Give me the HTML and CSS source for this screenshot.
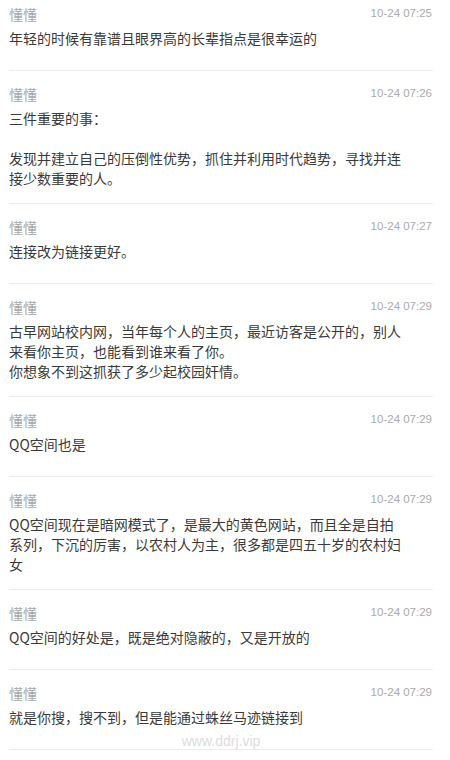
FILE: index.html
```html
<!DOCTYPE html>
<html lang="zh-CN">
<head>
<meta charset="utf-8">
<title>评论</title>
<link rel="stylesheet" href="styles.css">
</head>
<body>
<div class="list">
  <div class="item">
    <div class="head"><span class="name">懂懂</span><span class="time">10-24 07:25</span></div>
    <div class="text">年轻的时候有靠谱且眼界高的长辈指点是很幸运的</div>
  </div>
  <div class="item">
    <div class="head"><span class="name">懂懂</span><span class="time">10-24 07:26</span></div>
    <div class="text">三件重要的事：<br><br>发现并建立自己的压倒性优势，抓住并利用时代趋势，寻找并连接少数重要的人。</div>
  </div>
  <div class="item">
    <div class="head"><span class="name">懂懂</span><span class="time">10-24 07:27</span></div>
    <div class="text">连接改为链接更好。</div>
  </div>
  <div class="item">
    <div class="head"><span class="name">懂懂</span><span class="time">10-24 07:29</span></div>
    <div class="text">古早网站校内网，当年每个人的主页，最近访客是公开的，别人来看你主页，也能看到谁来看了你。<br>你想象不到这抓获了多少起校园奸情。</div>
  </div>
  <div class="item">
    <div class="head"><span class="name">懂懂</span><span class="time">10-24 07:29</span></div>
    <div class="text">QQ空间也是</div>
  </div>
  <div class="item">
    <div class="head"><span class="name">懂懂</span><span class="time">10-24 07:29</span></div>
    <div class="text">QQ空间现在是暗网模式了，是最大的黄色网站，而且全是自拍系列，下沉的厉害，以农村人为主，很多都是四五十岁的农村妇女</div>
  </div>
  <div class="item">
    <div class="head"><span class="name">懂懂</span><span class="time">10-24 07:29</span></div>
    <div class="text">QQ空间的好处是，既是绝对隐蔽的，又是开放的</div>
  </div>
  <div class="item last">
    <div class="head"><span class="name">懂懂</span><span class="time">10-24 07:29</span></div>
    <div class="text">就是你搜，搜不到，但是能通过蛛丝马迹链接到</div>
    <div class="watermark">www.ddrj.vip</div>
  </div>
</div>
</body>
</html>
```

FILE: styles.css
```css
html, body {
  margin: 0;
  padding: 0;
  background: #fff;
}

body {
  font-family: "Noto Sans CJK SC", "Noto Sans", sans-serif;
  color: #333;
}

.list {
  padding: 0 17px 0 9px;
}

.item {
  position: relative;
  padding: 13px 0 15px;
  border-bottom: 1px solid #ececec;
}

.item:first-child {
  padding-top: 4px;
}

.head {
  display: flex;
  justify-content: space-between;
  align-items: center;
  height: 20px;
  margin-bottom: 4px;
}

.name {
  font-size: 14px;
  line-height: 20px;
  color: #a8a8a8;
}

.time {
  font-family: "Liberation Sans", Arial, sans-serif;
  font-size: 11.5px;
  line-height: 20px;
  color: #aaa;
  margin-right: 1px;
  margin-top: -2px;
}

.text {
  font-size: 14px;
  line-height: 20px;
  min-height: 27px;
  margin-right: 29px;
  color: #3a3a3a;
}

.watermark {
  position: absolute;
  left: 0;
  right: 0;
  bottom: 0;
  text-align: center;
  font-family: "Liberation Sans", Arial, sans-serif;
  font-size: 14px;
  line-height: 16px;
  color: #dcdcdc;
}
```
